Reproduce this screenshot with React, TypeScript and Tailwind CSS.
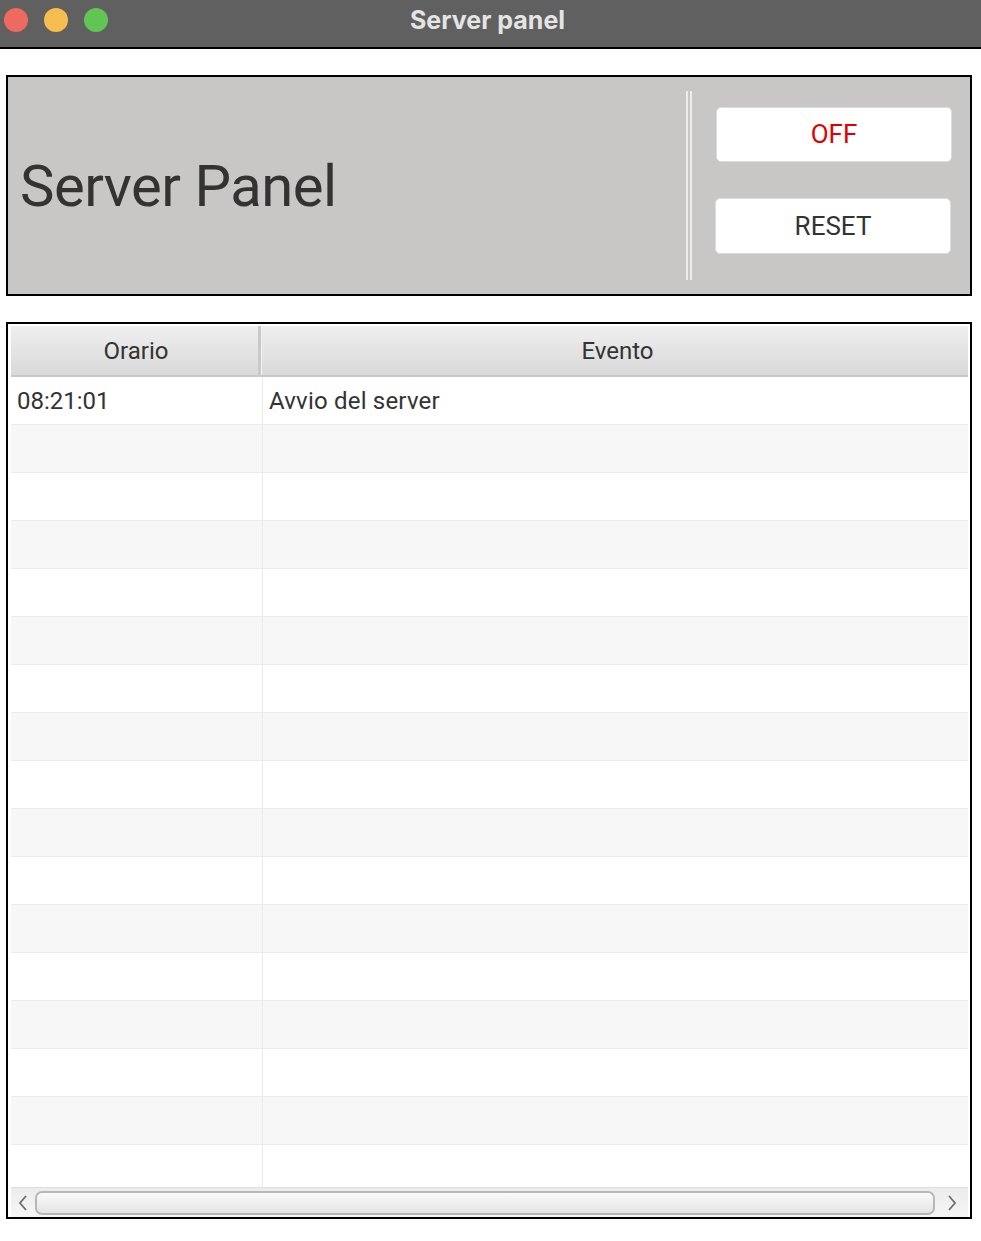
import React from 'react';

const rows = Array.from({ length: 17 }, (_, i) =>
  i === 0 ? { time: '08:21:01', event: 'Avvio del server' } : { time: '', event: '' }
);

export default function App() {
  return (
    <div className="w-[981px] h-[1241px] bg-white font-['Roboto',sans-serif] text-[#333333]">
      {/* Title bar */}
      <div className="relative h-[49px] bg-[#5f605f] border-b-2 border-black flex items-center justify-center">
        <div className="absolute left-[4px] top-[8px] flex gap-[16px]">
          <span className="w-[24px] h-[24px] rounded-full bg-[#ee6a5f]" />
          <span className="w-[24px] h-[24px] rounded-full bg-[#f5be4f]" />
          <span className="w-[24px] h-[24px] rounded-full bg-[#61c554]" />
        </div>
        <span className="font-['Inter',sans-serif] text-[25px] font-bold text-[#e4e4e4] -mt-[6px] -ml-[6px]">Server panel</span>
      </div>

      {/* Control panel */}
      <div className="ml-[6px] mr-[9px] mt-[26px] h-[221px] border-2 border-black bg-[#c8c7c6] flex">
        <div className="flex-1 flex items-center pl-[12px]">
          <h1 className="text-[58px] leading-none tracking-[-0.5px] text-[#333333]">Server Panel</h1>
        </div>
        <div className="py-[14px]">
          <div className="h-full w-[6px] flex justify-between">
            <span className="w-[2px] h-full bg-[#ececec]" />
            <span className="w-[2px] h-full bg-[#ececec]" />
          </div>
        </div>
        <div className="w-[278px] pl-[24px] pr-[17px] pt-[30px] flex flex-col gap-[36px]">
          <button className="h-[55px] w-[236px] bg-white rounded-[5px] border border-[#dcdcdc] text-[26px] text-[#e00000]">
            OFF
          </button>
          <button className="h-[56px] w-[236px] -ml-[1px] bg-white rounded-[5px] border border-[#dcdcdc] text-[26px] text-[#333333]">
            RESET
          </button>
        </div>
      </div>

      {/* Log table */}
      <div className="ml-[6px] mr-[9px] mt-[26px] h-[897px] border-2 border-black bg-white pt-[2px] pl-[3px] pr-[2px] flex flex-col">
        <div className="flex h-[51px] border-b-2 border-[#c8c8c8] bg-gradient-to-b from-[#efefef] to-[#d9d9d9] text-[24px]">
          <div className="w-[250px] flex items-center justify-center border-r-[3px] border-[#c9c9c9] pl-[3px]">Orario</div>
          <div className="flex-1 flex items-center justify-center border-l border-[#f2f2f2] pl-[5px]">Evento</div>
        </div>
        <div className="flex-1 overflow-hidden">
          {rows.map((r, i) => (
            <div
              key={i}
              className={`flex h-[48px] border-b border-[#ebebeb] text-[24px] ${
                i % 2 === 0 ? 'bg-white' : 'bg-[#f7f7f7]'
              }`}
            >
              <div className="w-[252px] pl-[6px] flex items-center border-r border-[#ebebeb]">{r.time}</div>
              <div className="flex-1 pl-[6px] flex items-center tracking-[0.2px]">{r.event}</div>
            </div>
          ))}
        </div>
        {/* Horizontal scrollbar */}
        <div className="h-[30px] bg-gradient-to-b from-[#ececec] to-[#f6f6f6] border-t border-[#dedede] flex items-center">
          <div className="w-[24px] flex justify-center">
            <svg width="12" height="18" viewBox="0 0 12 18">
              <polyline points="9,2 3,9 9,16" fill="none" stroke="#6f6f6f" strokeWidth="1.8" />
            </svg>
          </div>
          <div className="flex-1 h-[24px] rounded-[7px] border-2 border-[#b8b8b8] bg-gradient-to-b from-[#fafafa] to-[#e4e4e4]" />
          <div className="w-[33px] flex justify-center">
            <svg width="12" height="18" viewBox="0 0 12 18">
              <polyline points="3,2 9,9 3,16" fill="none" stroke="#6f6f6f" strokeWidth="1.8" />
            </svg>
          </div>
        </div>
      </div>
    </div>
  );
}
